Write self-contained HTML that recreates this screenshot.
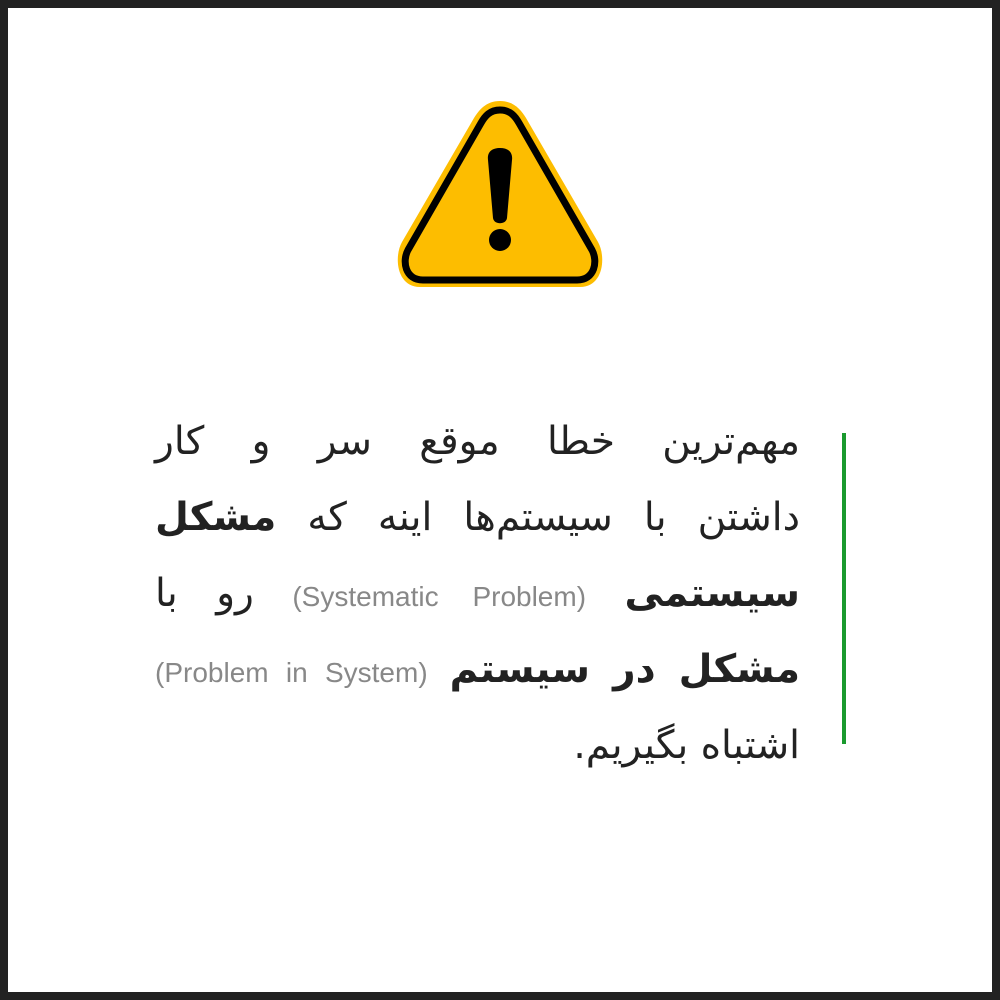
<!DOCTYPE html>
<html><head><meta charset="utf-8"><style>
html,body{margin:0;padding:0}
body{width:1000px;height:1000px;background:#222;position:relative;overflow:hidden}
.frame{position:absolute;left:8px;top:8px;width:984px;height:984px;background:#fff}
.bar{position:absolute;left:842px;top:433px;width:4px;height:311px;background:#1a9a2e}
.txt{position:absolute;left:155px;width:645px;top:404px;direction:rtl;font-family:"DejaVu Sans","Liberation Sans",sans-serif;font-size:39px;color:#222}
.l{height:76px;line-height:76px;text-align:justify;text-align-last:justify;white-space:nowrap}
.l.last{text-align-last:right}
b{font-weight:bold}
.en{font-family:"Liberation Sans",sans-serif;font-size:28px;color:#888;direction:ltr;unicode-bidi:isolate}
</style></head><body>
<div class="frame"></div>
<svg style="position:absolute;left:0;top:0" width="1000" height="1000">
<path d="M500,101 C486,101 479,110 474,118 L402,242 C394,256 396,287 420,287 L580,287 C604,287 606,256 598,242 L526,118 C521,110 514,101 500,101 Z" fill="#fdbd00"/>
<path d="M500,110 C490,110 485,116 481,123 L408,250 C402,261 405,280 423,280 L577,280 C595,280 598,261 592,250 L519,123 C515,116 510,110 500,110 Z" fill="none" stroke="#000" stroke-width="7"/>
<path d="M500,148 C508,148 513,152 512,160 L507,218 C506,225 494,225 493,218 L488,160 C487,152 492,148 500,148 Z" fill="#000"/>
<circle cx="500" cy="240" r="11" fill="#000"/>
</svg>
<div class="bar"></div>
<div class="txt">
<div class="l">مهم‌ترین خطا موقع سر و کار</div>
<div class="l">داشتن با سیستم‌ها اینه که <b>مشکل</b></div>
<div class="l"><b>سیستمی</b> <span class="en">(Systematic Problem)</span> رو با</div>
<div class="l"><b>مشکل در سیستم</b> <span class="en">(Problem in System)</span></div>
<div class="l last">اشتباه بگیریم.</div>
</div>
</body></html>
